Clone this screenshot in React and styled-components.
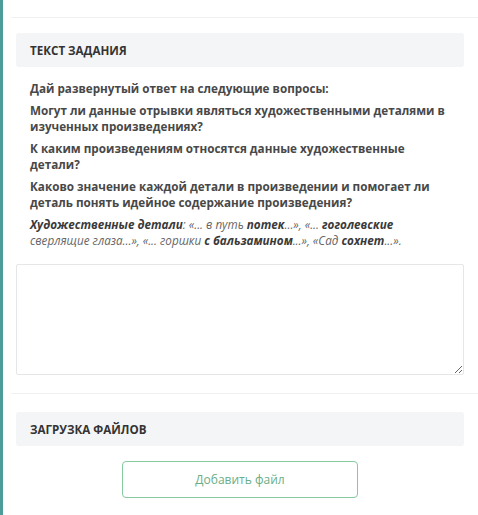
import React from "react";
import styled, { createGlobalStyle } from "styled-components";

// --- Global --- //

const GlobalStyle = createGlobalStyle`
  html, body {
    margin: 0;
    padding: 0;
    background: #ffffff;
  }
  body {
    font-family: "Open Sans", "Liberation Sans", sans-serif;
    color: #444;
  }
`;

// --- Components --- //

const App = () => {
  return (
    <>
      <GlobalStyle />
      <StyledPage>
        <StyledTopStrip />
        <StyledCard>
          <StyledHeader>Текст задания</StyledHeader>
          <StyledTask>
            <p className="q">Дай развернутый ответ на следующие вопросы:</p>
            <p className="q">
              Могут ли данные отрывки являться художественными деталями в
              изученных произведениях?
            </p>
            <p className="q">
              К каким произведениям относятся данные художественные детали?
            </p>
            <p className="q">
              Каково значение каждой детали в произведении и помогает ли деталь
              понять идейное содержание произведения?
            </p>
            <p className="note">
              <b>Художественные детали</b>: «... в путь <b>потек</b>...», «...{" "}
              <b>гоголевские</b> сверлящие глаза...», «... горшки{" "}
              <b>с бальзамином</b>...», «Сад <b>сохнет</b>...».
            </p>
          </StyledTask>
          <StyledAnswer />
        </StyledCard>
        <StyledCard>
          <StyledHeader>Загрузка файлов</StyledHeader>
          <StyledUploadRow>
            <StyledAddButton type="button">Добавить файл</StyledAddButton>
          </StyledUploadRow>
        </StyledCard>
      </StyledPage>
    </>
  );
};

export default App;

// --- Styles --- //

const StyledPage = styled.div`
  border-left: solid 3px #4e9c9a;
  min-height: 515px;
  box-sizing: border-box;
  background: #fff;
`;

const StyledTopStrip = styled.div`
  height: 17px;
  margin-left: 8px;
  border-bottom: solid 1px #f0f0f0;
`;

const StyledCard = styled.section`
  padding: 15px 14px 18px 13px;
  & + & {
    margin-left: 8px;
    padding-top: 18px;
    padding-left: 5px;
    border-top: solid 1px #f0f0f0;
  }
`;

const StyledHeader = styled.h2`
  margin: 0;
  height: 34px;
  display: flex;
  align-items: center;
  padding: 0 14px;
  background: #f3f5f7;
  border-radius: 3px;
  font-size: 11.6px;
  font-weight: 700;
  text-transform: uppercase;
  color: #333;
`;

const StyledTask = styled.div`
  padding: 13px 12px 0 14px;
  font-size: 11.7px;
  line-height: 16px;

  p {
    margin: 0 0 6px;
  }
  .q {
    font-weight: 700;
    color: #484848;
  }
  .note {
    font-style: italic;
    color: #666;
    margin-bottom: 0;
    b {
      color: #3a3a3a;
    }
  }
`;

const StyledAnswer = styled.textarea`
  display: block;
  box-sizing: border-box;
  width: 100%;
  height: 111px;
  margin-top: 16px;
  border: solid 1px #e4e6e8;
  border-radius: 2px;
  resize: vertical;
  font-family: inherit;
`;

const StyledUploadRow = styled.div`
  display: flex;
  padding-top: 15px;
  padding-left: 106px;
`;

const StyledAddButton = styled.button`
  width: 236px;
  height: 37px;
  background: #fff;
  border: solid 1px #86c9a1;
  border-radius: 4px;
  color: #6aae86;
  font-family: "Open Sans", "Liberation Sans", sans-serif;
  font-size: 12px;
  cursor: pointer;
`;
